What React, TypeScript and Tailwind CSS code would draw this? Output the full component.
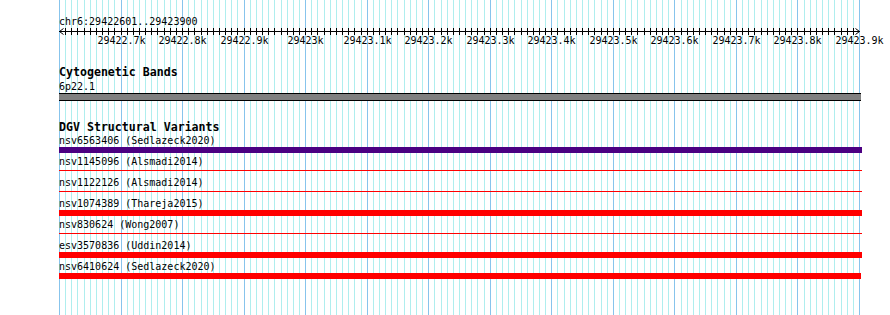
import React from "react";

const N = 130;
const X0 = 59;
const W = 800;
const xs = Array.from({ length: N + 1 }, (_, i) => X0 + Math.round((i * W) / N));

const labels = Array.from({ length: 13 }, (_, k) => {
  const i = (k + 1) * 10;
  const bp = 29422600 + i * 10;
  const v = bp / 1000;
  const s = Number.isInteger(v) ? `${v}k` : `${v.toFixed(1)}k`;
  return { x: xs[i], s };
});

type Row = { label: string; kind: "thick" | "thin"; color: string; w?: number };
const rows: Row[] = [
  { label: "nsv6563406 (Sedlazeck2020)", kind: "thick", color: "bg-[#4b0082]" },
  { label: "nsv1145096 (Alsmadi2014)", kind: "thin", color: "bg-[#ff0000]" },
  { label: "nsv1122126 (Alsmadi2014)", kind: "thin", color: "bg-[#ff0000]" },
  { label: "nsv1074389 (Thareja2015)", kind: "thick", color: "bg-[#ff0000]" },
  { label: "nsv830624 (Wong2007)", kind: "thin", color: "bg-[#ff0000]" },
  { label: "esv3570836 (Uddin2014)", kind: "thick", color: "bg-[#ff0000]" },
  { label: "nsv6410624 (Sedlazeck2020)", kind: "thick", color: "bg-[#ff0000]", w: 802 },
];

const mono = "font-['DejaVu_Sans_Mono',monospace]";

export default function App() {
  return (
    <div className={`relative w-[890px] h-[315px] bg-white overflow-hidden text-black ${mono}`}>
      <svg className="absolute inset-0" width={890} height={315} shapeRendering="crispEdges">
        {xs.map((x, i) => (
          <line
            key={i}
            x1={x + 0.5}
            x2={x + 0.5}
            y1={0}
            y2={315}
            stroke={i % 10 === 0 ? "#87c4ec" : "#afeeee"}
            strokeWidth={1}
          />
        ))}
      </svg>
      <div className="relative flex flex-col">
        <div className="mt-[15px] h-[13px] leading-[13px] text-[10px] pl-[59px]">chr6:29422601..29423900</div>
        <svg width={890} height={18} className="block">
          <g shapeRendering="crispEdges" stroke="#000" strokeWidth={1}>
            <line x1={X0} x2={X0 + W + 1} y1={3.5} y2={3.5} />
            {xs.map((x, i) =>
              i === 0 || i === N ? null : <line key={i} x1={x + 0.5} x2={x + 0.5} y1={0} y2={7} />
            )}
          </g>
          <polyline points={`${X0 + 4.5},0.5 ${X0 + 0.5},3.5 ${X0 + 4.5},6.5`} fill="none" stroke="#000" strokeWidth={1} />
          <polyline points={`${X0 + W - 3.5},0.5 ${X0 + W + 0.5},3.5 ${X0 + W - 3.5},6.5`} fill="none" stroke="#000" strokeWidth={1} />
          {labels.map((l) => (
            <text
              key={l.s}
              x={l.x + 0.5}
              y={16}
              textAnchor="middle"
              fontFamily="DejaVu Sans Mono, monospace"
              fontSize={10}
              fill="#000"
            >
              {l.s}
            </text>
          ))}
        </svg>
        <div className="mt-[20px] h-[13px] leading-[13px] text-[11.6px] font-bold pl-[59px]">Cytogenetic Bands</div>
        <div className="mt-px h-[13px] leading-[13px] text-[10px] pl-[59px]">6p22.1</div>
        <div className="ml-[59px] w-[802px] h-[8px] border-y border-black bg-[#808080]" />
        <div className="mt-[20px] h-[13px] leading-[13px] text-[11.6px] font-bold pl-[59px]">DGV Structural Variants</div>
        <div className="flex flex-col gap-[2px]">
          {rows.map((r) => (
            <div key={r.label} className="flex flex-col">
              <div className="h-[13px] leading-[13px] text-[10px] pl-[59px] whitespace-pre">{r.label}</div>
              <div className="h-[6px] ml-[59px] flex flex-col">
                {r.kind === "thick" ? (
                  <div className={`h-[6px] ${r.w ? "w-[802px]" : "w-[803px]"} ${r.color}`} />
                ) : (
                  <div className={`mt-[2px] h-px w-[803px] ${r.color}`} />
                )}
              </div>
            </div>
          ))}
        </div>
      </div>
    </div>
  );
}
